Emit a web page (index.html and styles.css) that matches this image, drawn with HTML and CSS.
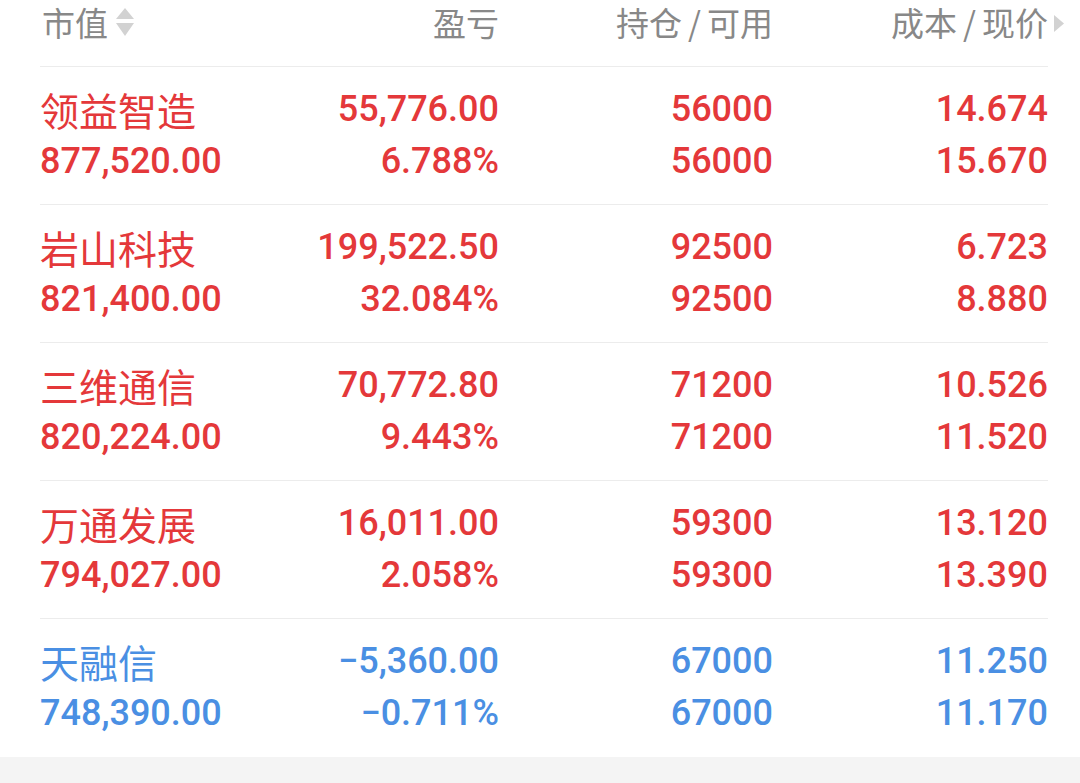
FILE: index.html
```html
<!DOCTYPE html>
<html lang="zh">
<head>
<meta charset="utf-8">
<link rel="stylesheet" href="styles.css">
</head>
<body>
<div class="list">
  <div class="head row-grid">
    <div class="hcell left">市值<svg class="sort" width="18" height="30" viewBox="0 0 18 30"><polygon points="9,0 18,11 0,11" fill="#d2d2d2"/><polygon points="0,15 18,15 9,28" fill="#d2d2d2"/></svg></div>
    <div class="hcell">盈亏</div>
    <div class="hcell">持仓<span class="sl">/</span>可用</div>
    <div class="hcell last">成本<span class="sl">/</span>现价<svg class="arrow" width="10" height="17" viewBox="0 0 10 17"><polygon points="0,0 10,8.5 0,17" fill="#d2d2d2"/></svg></div>
  </div>

  <div class="row row-grid up">
    <div class="cell left"><div class="name">领益智造</div><div class="num">877,520.00</div></div>
    <div class="cell"><div class="num">55,776.00</div><div class="num">6.788%</div></div>
    <div class="cell"><div class="num">56000</div><div class="num">56000</div></div>
    <div class="cell"><div class="num">14.674</div><div class="num">15.670</div></div>
  </div>

  <div class="row row-grid up">
    <div class="cell left"><div class="name">岩山科技</div><div class="num">821,400.00</div></div>
    <div class="cell"><div class="num">199,522.50</div><div class="num">32.084%</div></div>
    <div class="cell"><div class="num">92500</div><div class="num">92500</div></div>
    <div class="cell"><div class="num">6.723</div><div class="num">8.880</div></div>
  </div>

  <div class="row row-grid up">
    <div class="cell left"><div class="name">三维通信</div><div class="num">820,224.00</div></div>
    <div class="cell"><div class="num">70,772.80</div><div class="num">9.443%</div></div>
    <div class="cell"><div class="num">71200</div><div class="num">71200</div></div>
    <div class="cell"><div class="num">10.526</div><div class="num">11.520</div></div>
  </div>

  <div class="row row-grid up">
    <div class="cell left"><div class="name">万通发展</div><div class="num">794,027.00</div></div>
    <div class="cell"><div class="num">16,011.00</div><div class="num">2.058%</div></div>
    <div class="cell"><div class="num">59300</div><div class="num">59300</div></div>
    <div class="cell"><div class="num">13.120</div><div class="num">13.390</div></div>
  </div>

  <div class="row row-grid down lastrow">
    <div class="cell left"><div class="name">天融信</div><div class="num">748,390.00</div></div>
    <div class="cell"><div class="num">−5,360.00</div><div class="num">−0.711%</div></div>
    <div class="cell"><div class="num">67000</div><div class="num">67000</div></div>
    <div class="cell"><div class="num">11.250</div><div class="num">11.170</div></div>
  </div>
</div>
<div class="foot"></div>
</body>
</html>
```

FILE: styles.css
```css
html, body {
  margin: 0;
  padding: 0;
}
body {
  background: #f4f4f4;
  width: 1080px;
  height: 783px;
  overflow: hidden;
  font-family: "Noto Sans CJK SC", "Noto Sans", sans-serif;
}
.list {
  background: #ffffff;
  padding: 0 32px 0 40px;
  height: 757px;
}
.row-grid {
  display: grid;
  grid-template-columns: 185px 274px 274px 275px;
}
.head {
  box-sizing: border-box;
  height: 67px;
  border-bottom: 1px solid #ececec;
}
.hcell {
  font-size: 33px;
  line-height: 44px;
  color: #888888;
  text-align: right;
  position: relative;
}
.hcell.left {
  text-align: left;
  display: flex;
  align-items: center;
  height: 44px;
  padding-left: 2px;
}
.sort {
  margin-left: 8px;
  margin-top: 2px;
}
.sl {
  margin: 0 6px;
}
.arrow {
  position: absolute;
  left: calc(100% + 6px);
  top: 15px;
}
.row {
  box-sizing: border-box;
  height: 138px;
  padding-top: 16px;
  border-bottom: 1px solid #ececec;
}
.row.lastrow {
  border-bottom: none;
  height: 137px;
}
.cell {
  text-align: right;
}
.cell.left {
  text-align: left;
}
.num {
  font-family: Roboto, "Noto Sans", sans-serif;
  font-weight: 500;
  font-size: 36px;
  line-height: 52px;
  height: 52px;
}
.name {
  font-size: 39px;
  line-height: 52px;
  height: 52px;
}
.up {
  color: #e4383a;
}
.down {
  color: #4a8fe3;
}
.foot {
  height: 26px;
}
```
